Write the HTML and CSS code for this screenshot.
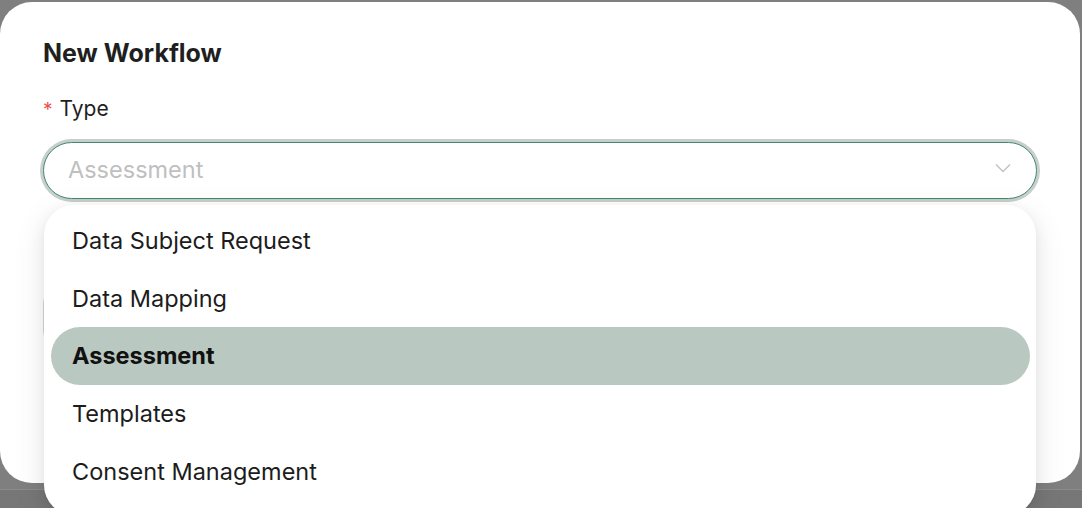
FILE: index.html
```html
<!DOCTYPE html>
<html lang="en">
<head>
<meta charset="utf-8">
<title>New Workflow</title>
<link rel="stylesheet" href="styles.css">
</head>
<body>
<div class="overlay">
  <div class="dialog">
    <h1 class="title">New Workflow</h1>
    <div class="field">
      <label class="label"><span class="req">*</span>Type</label>
      <div class="select">
        <span class="placeholder">Assessment</span>
        <svg class="chev" width="16" height="10" viewBox="0 0 16 10"><path d="M1 1.5 L8 8.5 L15 1.5" fill="none" stroke="#c2c2c2" stroke-width="1.4"/></svg>
      </div>
    </div>
    <div class="field2">
      <div class="ghost"></div>
    </div>
    <ul class="menu">
      <li class="opt">Data Subject Request</li>
      <li class="opt">Data Mapping</li>
      <li class="opt sel">Assessment</li>
      <li class="opt">Templates</li>
      <li class="opt">Consent Management</li>
    </ul>
  </div>
</div>
</body>
</html>
```
FILE: styles.css
```css
html, body {
  margin: 0;
  height: 100%;
  overflow: hidden;
}
body {
  background: linear-gradient(to bottom, #7f7f7f 0, #7f7f7f 489px, #8b8b8b 489px, #8b8b8b 490px, #777777 490px);
  font-family: Inter, "Noto Sans", sans-serif;
  color: #1c1c1c;
}
.overlay {
  padding-top: 2px;
}
.dialog {
  position: relative;
  width: 1080px;
  height: 481px;
  box-sizing: border-box;
  background: #ffffff;
  border-radius: 32px;
  padding: 36px 43px;
}
.title {
  margin: 0;
  font-size: 25px;
  line-height: 30px;
  font-weight: 700;
  color: #1f1f1f;
}
.field {
  margin-top: 27px;
}
.label {
  display: block;
  font-size: 21px;
  line-height: 28px;
  color: #1f1f1f;
}
.req {
  color: #ea5252;
  margin-right: 7px;
  font-size: 19px;
}
.select {
  margin-top: 18px;
  height: 57px;
  box-sizing: border-box;
  border: 1px solid #3f8a6e;
  border-radius: 29px;
  box-shadow: 0 0 0 3px #c8cfcb;
  display: flex;
  align-items: center;
  justify-content: space-between;
  padding: 0 24px 0 24px;
  background: #fff;
}
.placeholder {
  font-size: 23.5px;
  color: #bfbfbf;
  margin-bottom: 3px;
}
.chev {
  display: block;
  margin-right: 1px;
  margin-bottom: 6px;
}
.field2 {
  margin-top: 92px;
}
.ghost {
  height: 50px;
  margin-right: 3px;
  border: 1px solid #d9d9d9;
  border-radius: 12px;
}
.menu {
  position: absolute;
  left: 44px;
  top: 203px;
  width: 992px;
  height: 310px;
  box-sizing: border-box;
  margin: 0;
  padding: 7px 6px 0 7px;
  list-style: none;
  background: #ffffff;
  border-radius: 30px;
  box-shadow: 0 6px 16px 0 rgba(0,0,0,0.08), 0 3px 6px -4px rgba(0,0,0,0.12), 0 9px 28px 8px rgba(0,0,0,0.05);
}
.opt {
  height: 57.6px;
  display: flex;
  align-items: center;
  padding-left: 21px;
  font-size: 23.5px;
  color: #1c1c1c;
  border-radius: 29px;
}
.opt.sel {
  background: #b9c8c0;
  font-weight: 700;
  color: #111;
}
```
